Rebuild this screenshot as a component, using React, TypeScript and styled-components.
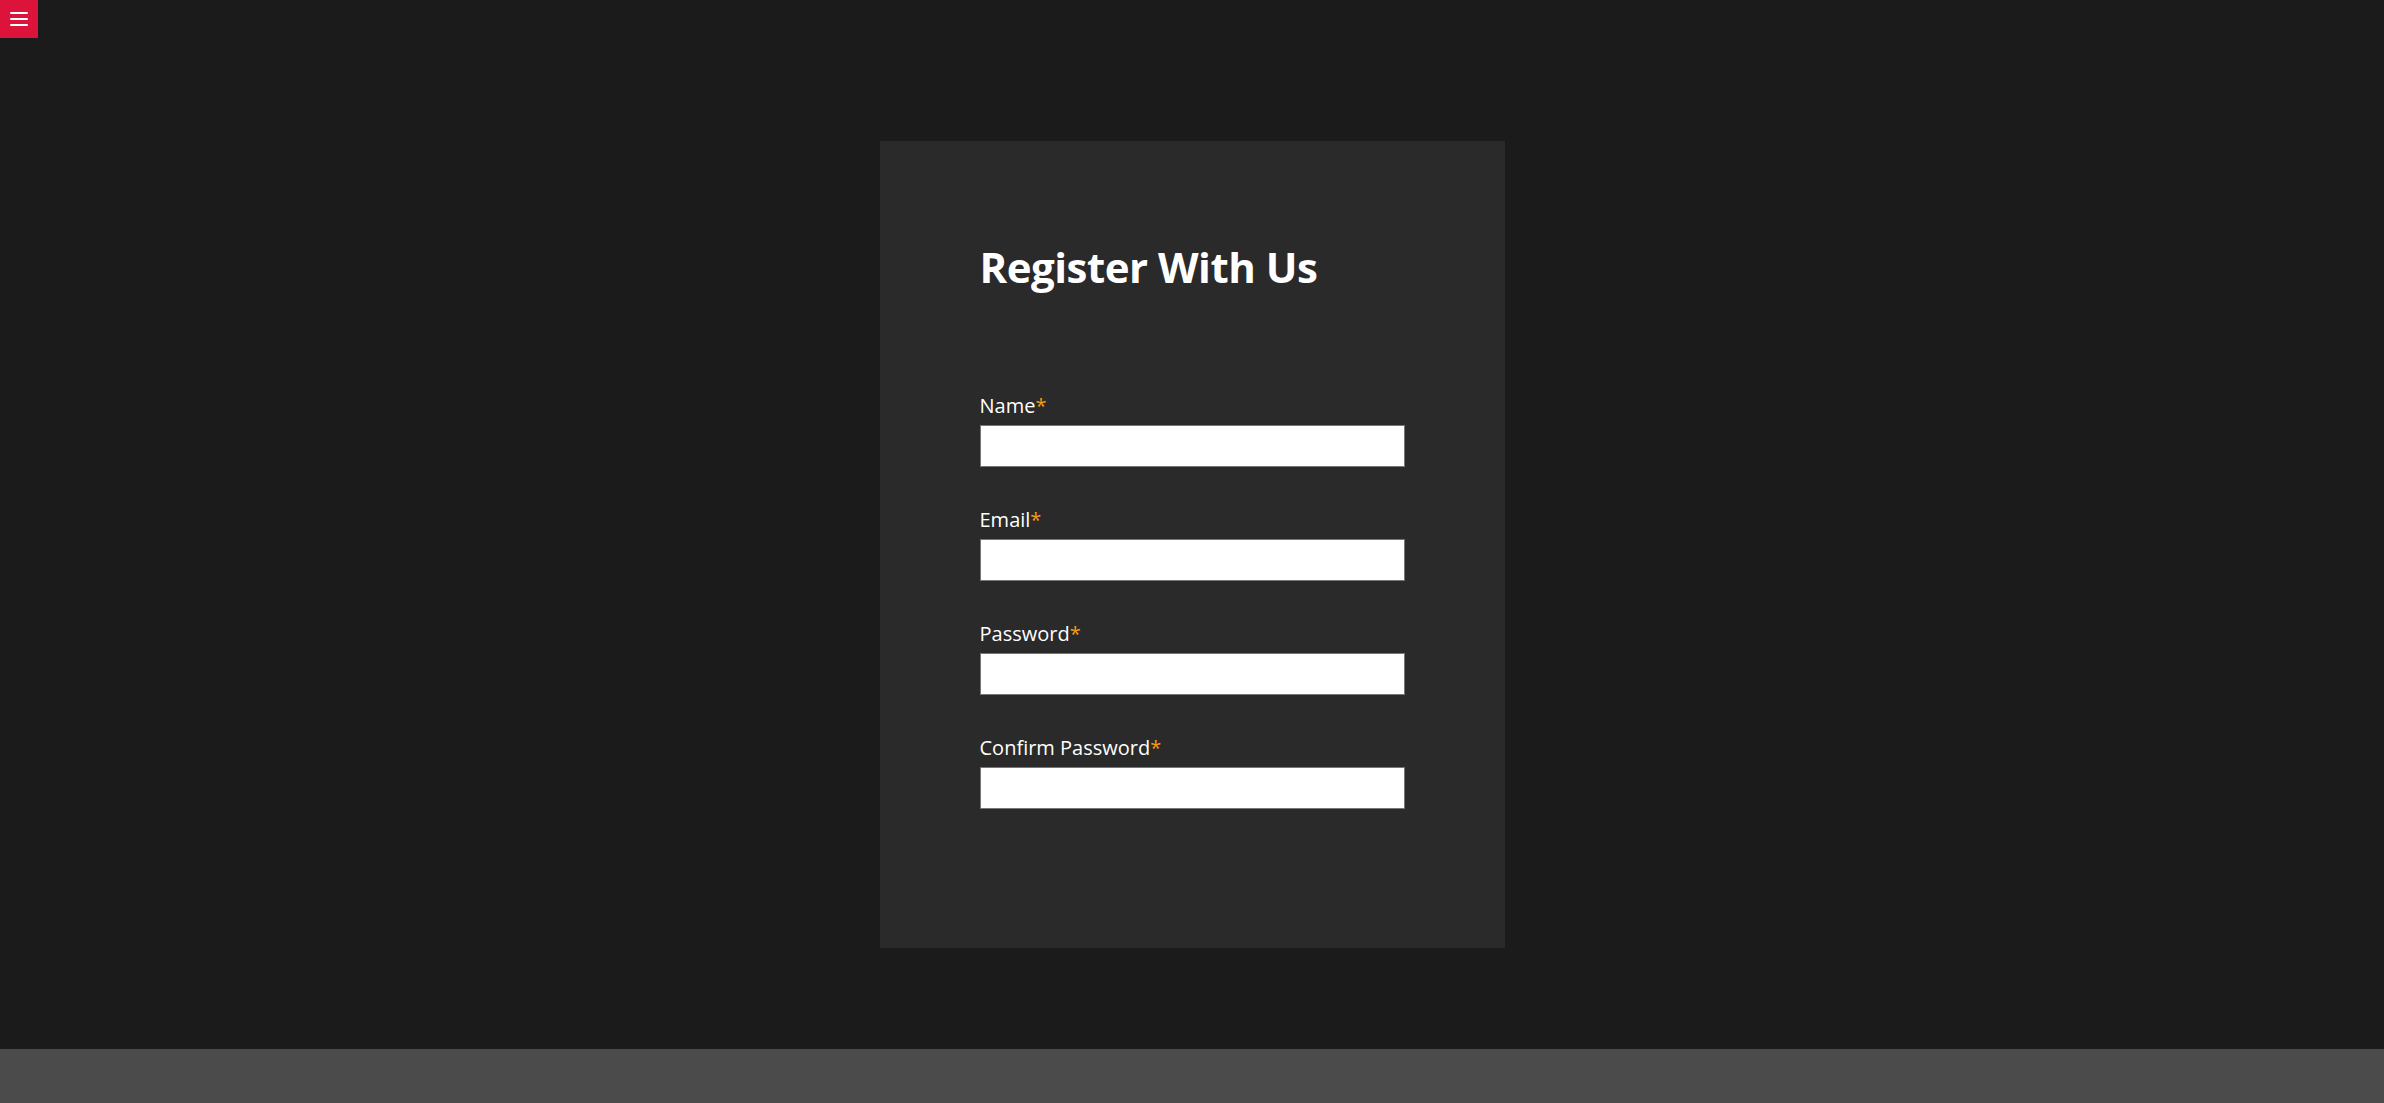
import React from "react";
import styled, { createGlobalStyle } from "styled-components";

const GlobalStyle = createGlobalStyle`
  html, body {
    margin: 0;
    padding: 0;
    background: #1b1b1b;
  }
  body {
    font-family: "Open Sans", "Noto Sans", "Liberation Sans", sans-serif;
    color: #ffffff;
  }
  * { box-sizing: border-box; }
`;

const Page = styled.div`
  display: flex;
  flex-direction: column;
  min-height: 1103px;
  background: #1b1b1b;
`;

const MenuButton = styled.button`
  position: fixed;
  top: 0;
  left: 0;
  width: 38px;
  height: 38px;
  padding: 0;
  border: none;
  background: #dc143c;
  display: flex;
  flex-direction: column;
  align-items: center;
  justify-content: center;
  gap: 4px;
  cursor: pointer;
`;

const MenuLine = styled.span`
  display: block;
  width: 18px;
  height: 2px;
  border-radius: 1px;
  background: #ffffff;
`;

const Main = styled.main`
  flex: 1;
  display: flex;
  justify-content: center;
  align-items: flex-start;
  padding: 141px 0 101px;
`;

const Card = styled.section`
  width: 625px;
  height: 807px;
  padding: 104px 100px 100px;
  background: #2a2a2a;
  display: flex;
  flex-direction: column;
`;

const Title = styled.h1`
  margin: 0 0 104px;
  font-size: 42px;
  line-height: 44px;
  font-weight: 700;
  color: #ffffff;
  letter-spacing: -0.5px;
`;

const Form = styled.form`
  display: flex;
  flex-direction: column;
  gap: 40px;
`;

const Field = styled.div`
  display: flex;
  flex-direction: column;
  gap: 7px;
`;

const Label = styled.label`
  font-size: 20px;
  line-height: 25px;
  color: #ffffff;
`;

const Required = styled.span`
  color: #f39c12;
`;

const Input = styled.input`
  width: 100%;
  height: 42px;
  margin: 0;
  padding: 0 8px;
  border: 1px solid #767676;
  background: #ffffff;
  font-size: 16px;
  outline: none;
`;

const Footer = styled.footer`
  height: 54px;
  background: #4b4b4b;
`;

const fields = [
  { id: "name", label: "Name", type: "text" },
  { id: "email", label: "Email", type: "email" },
  { id: "password", label: "Password", type: "password" },
  { id: "confirm", label: "Confirm Password", type: "password" },
];

export default function App() {
  return (
    <>
      <GlobalStyle />
      <Page>
        <MenuButton aria-label="Menu">
          <MenuLine />
          <MenuLine />
          <MenuLine />
        </MenuButton>
        <Main>
          <Card>
            <Title>Register With Us</Title>
            <Form onSubmit={(e) => e.preventDefault()}>
              {fields.map((f) => (
                <Field key={f.id}>
                  <Label htmlFor={f.id}>
                    {f.label}
                    <Required>*</Required>
                  </Label>
                  <Input id={f.id} type={f.type} />
                </Field>
              ))}
            </Form>
          </Card>
        </Main>
        <Footer />
      </Page>
    </>
  );
}
